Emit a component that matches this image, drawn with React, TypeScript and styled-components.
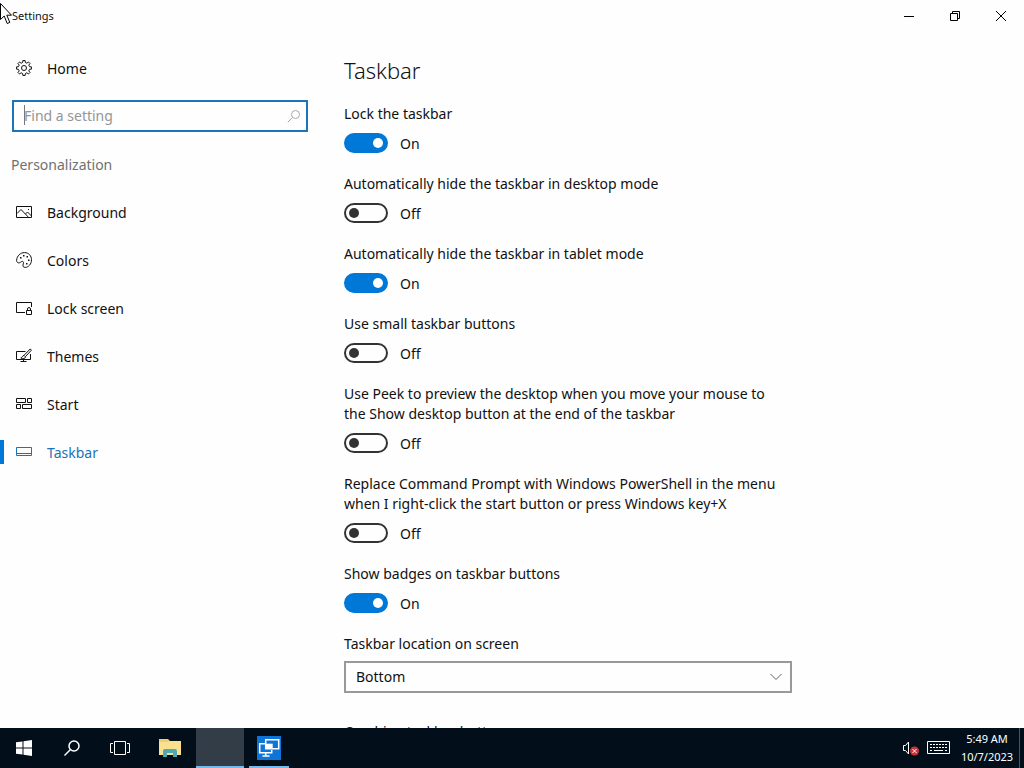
import React, { useState } from "react";
import styled, { createGlobalStyle } from "styled-components";

const GlobalStyle = createGlobalStyle`
  *, *::before, *::after { box-sizing: border-box; }
  html, body, #root { height: 100%; }
  body {
    margin: 0;
    overflow: hidden;
    background: #fefefe;
    color: #111;
    font-family: "Noto Sans", "Open Sans", sans-serif;
    font-size: 14px;
    line-height: 20px;
  }
  button, input, select { font: inherit; color: inherit; }
`;

const Screen = styled.div`
  display: flex;
  flex-direction: column;
  height: 100vh;
`;

const TitleBar = styled.header`
  display: flex;
  justify-content: space-between;
  flex: none;
  height: 32px;
  padding-left: 12px;
`;

const Title = styled.span`
  font-size: 11px;
  line-height: 32px;
`;

const WindowButtons = styled.div`
  display: flex;
`;

const WindowButton = styled.button`
  display: grid;
  place-items: center;
  width: 46px;
  padding: 0;
  border: 0;
  background: transparent;
`;

const Body = styled.div`
  display: flex;
  flex: 1;
  min-height: 0;
`;

const Sidebar = styled.aside`
  flex: none;
  width: 320px;
  padding-top: 12px;
`;

const NavLink = styled.a<{ $active?: boolean }>`
  display: flex;
  align-items: center;
  gap: 14px;
  height: 48px;
  padding-left: 16px;
  color: ${(p) => (p.$active ? "#1a73b8" : "#111")};
  text-decoration: none;
  background: ${(p) =>
    p.$active ? "linear-gradient(#0078d7, #0078d7) 0 50% / 4px 24px no-repeat" : "none"};

  svg { flex: none; }
`;

const NavText = styled.span`
  padding-top: 2px;
`;

const SearchField = styled.label`
  position: relative;
  display: flex;
  align-items: center;
  height: 32px;
  margin: 8px 12px;
  padding: 0 5px 0 10px;
  border: 2px solid #1c74bb;
`;

const SearchInput = styled.input`
  flex: 1;
  min-width: 0;
  padding: 0;
  border: 0;
  outline: 0;
  background: transparent;
  &::placeholder { color: #959595; opacity: 1; }
`;

const Caret = styled.span`
  position: absolute;
  top: 3px;
  left: 10px;
  width: 1px;
  height: 20px;
  background: #777;
`;

const SectionName = styled.h2`
  margin: 0;
  padding: 15px 11px 13px;
  color: #707070;
  font-size: 14px;
  font-weight: 400;
`;

const Content = styled.main`
  flex: 1;
  min-width: 0;
  padding: 23px 24px 0;
  overflow-y: auto;
  scrollbar-width: none;
`;

const Heading = styled.h1`
  margin: 0 0 19px;
  font-size: 22px;
  font-weight: 300;
  line-height: 30px;
`;

const Setting = styled.div`
  display: flex;
  flex-direction: column;
  gap: 9px;
  max-width: 440px;
  margin-bottom: 21px;
`;

const PickSetting = styled(Setting)`
  gap: 7px;
  max-width: 448px;
  margin-bottom: 29px;
`;

const ToggleRow = styled.div`
  display: flex;
  align-items: center;
  gap: 12px;
  height: 20px;
`;

const ToggleState = styled.span`
  padding-top: 2px;
`;

const Switch = styled.input`
  appearance: none;
  display: flex;
  align-items: center;
  width: 44px;
  height: 20px;
  margin: 0;
  padding: 0 3px;
  border: 2px solid #333;
  border-radius: 10px;

  &::before {
    content: "";
    width: 10px;
    height: 10px;
    border-radius: 50%;
    background: #333;
  }
  &:checked {
    justify-content: flex-end;
    border-color: #0078d7;
    background: #0078d7;
  }
  &:checked::before { background: #fff; }
`;

const SelectBox = styled.div`
  display: grid;
  align-items: center;
  > * { grid-area: 1 / 1; }
  > svg { justify-self: end; margin-right: 9px; pointer-events: none; }
`;

const Select = styled.select`
  appearance: none;
  width: 100%;
  height: 32px;
  padding: 0 10px;
  border: 2px solid #999;
  border-radius: 0;
  background: #fefefe;
`;

const Taskbar = styled.footer`
  display: flex;
  justify-content: space-between;
  flex: none;
  height: 40px;
  background: #020f1a;
  color: #fff;
`;

const TaskGroup = styled.div`
  display: flex;
`;

const TaskButton = styled.button<{ $width?: number; $active?: boolean; $running?: boolean }>`
  display: grid;
  place-items: center;
  width: ${(p) => p.$width ?? 48}px;
  padding: 0;
  border: 0;
  background: ${(p) => (p.$active ? "#323d47" : "transparent")};
  box-shadow: ${(p) => (p.$running ? "inset 0 -2px #76b9ed" : "none")};
`;

const RemoteButton = styled(TaskButton)`
  margin-left: 5px;
`;

const Tray = styled.div`
  display: flex;
  align-items: center;
  padding-right: 4px;
`;

const TrayButton = styled.button`
  display: grid;
  place-items: center;
  margin-right: 8px;
  padding: 0;
  border: 0;
  background: transparent;
`;

const Clock = styled.time`
  width: 58px;
  margin-right: 3px;
  font-size: 11px;
  line-height: 18px;
  text-align: center;
  white-space: nowrap;
`;

const ShowDesktop = styled.button`
  align-self: stretch;
  width: 1px;
  padding: 0;
  border: 0;
  background: #4b555e;
`;

const Pointer = styled.svg`
  position: absolute;
  top: 2px;
  left: 0;
  pointer-events: none;
`;

const gearPath = Array.from({ length: 8 }, (_, i) => {
  const at = (r: number, deg: number) => {
    const a = ((i * 45 + deg) * Math.PI) / 180;
    return `${(8 + r * Math.sin(a)).toFixed(2)} ${(8 - r * Math.cos(a)).toFixed(2)}`;
  };
  return `${i ? "L" : "M"}${at(5.8, -13)} L${at(7.5, -9)} L${at(7.5, 9)} L${at(5.8, 13)} L${at(5.4, 22)}`;
}).join(" ") + "Z";

const Icon = ({ children }: { children: React.ReactNode }) => (
  <svg width="17" height="16" viewBox="0 0 17 16" fill="none" stroke="currentColor" aria-hidden="true">
    {children}
  </svg>
);

const navItems = [
  {
    name: "Background",
    icon: (
      <>
        <path d="M.5 2.5h15v11H.5z" />
        <path d="M1 9.5l4-4 7.5 7.8M9.5 10l2-2 4 4" />
        <path d="M12 5h1v1h-1z" fill="currentColor" stroke="none" />
      </>
    ),
  },
  {
    name: "Colors",
    icon: (
      <>
        <path d="M.6 8.2C1 3.8 4.3.6 8.5.6c4.2 0 7 3.2 7 7.2 0 4.3-3 7.5-6.3 7.6-1.7 0-2.4-1-2.2-2.3.2-1.5 1-2.6.1-3.4-1-1-2 .4-3.3 1C2.2 11.4.5 10.3.6 8.2z" />
        <path d="M4 5h1.5v1.5H4zM7 3h1.5v1.5H7zM10.500 4H12v1.500h-1.500zM12 7.500h1.500V9H12zM10 11h1.500v1.500H10z" fill="currentColor" stroke="none" />
      </>
    ),
  },
  {
    name: "Lock screen",
    icon: (
      <>
        <path d="M9 12.500H.5v-10h15V7" />
        <path d="M10.500 10.500h5v4h-5zM11.500 10.500V9a1.500 1.500 0 0 1 3 0v1.500" />
      </>
    ),
  },
  {
    name: "Themes",
    icon: (
      <>
        <path d="M9.500 3.500h-9v8h14V6M7.500 11.500v2M4.500 13.500h6" />
        <path d="M14.300.9L8 7.300l1.400 1.400L15.300 2.300zM8 7.500c-2 0-1.500 2.300-3.200 2.500 2 1 4.500.7 4.700-1" />
      </>
    ),
  },
  { name: "Start", icon: <path d="M.5 2.500h9v4h-9zM11.500 2.500h4v4h-4zM.5 8.500h4v4h-4zM6.500 8.500h9v4h-9z" /> },
  { name: "Taskbar", icon: <path d="M.5 3.500h15v8H.5zM.5 9.500h15" />, active: true },
];

const toggles: [string, boolean][] = [
  ["Lock the taskbar", true],
  ["Automatically hide the taskbar in desktop mode", false],
  ["Automatically hide the taskbar in tablet mode", true],
  ["Use small taskbar buttons", false],
  ["Use Peek to preview the desktop when you move your mouse to the Show desktop button at the end of the taskbar", false],
  ["Replace Command Prompt with Windows PowerShell in the menu when I right-click the start button or press Windows key+X", false],
  ["Show badges on taskbar buttons", true],
];

function ToggleSetting({ label, initial }: { label: string; initial: boolean }) {
  const [on, setOn] = useState(initial);
  const id = React.useId();
  return (
    <Setting>
      <label htmlFor={id}>{label}</label>
      <ToggleRow>
        <Switch id={id} type="checkbox" role="switch" checked={on} onChange={() => setOn(!on)} />
        <ToggleState>{on ? "On" : "Off"}</ToggleState>
      </ToggleRow>
    </Setting>
  );
}

function PickerSetting({ id, label, options }: { id: string; label: string; options: string[] }) {
  return (
    <PickSetting>
      <label htmlFor={id}>{label}</label>
      <SelectBox>
        <Select id={id}>
          {options.map((o) => (
            <option key={o}>{o}</option>
          ))}
        </Select>
        <svg width="14" height="8" viewBox="0 0 14 8" fill="none" stroke="#666" aria-hidden="true">
          <path d="M1.500 1L7 6.500 12.500 1" />
        </svg>
      </SelectBox>
    </PickSetting>
  );
}

export default function App() {
  return (
    <Screen>
      <GlobalStyle />
      <TitleBar>
        <Title>Settings</Title>
        <WindowButtons>
          <WindowButton aria-label="Minimize">
            <svg width="10" height="10" stroke="#000"><path d="M0 5.500h10" /></svg>
          </WindowButton>
          <WindowButton aria-label="Restore">
            <svg width="10" height="10" fill="none" stroke="#000"><path d="M.5 2.500h7v7h-7zM2.500 2.500v-2h7v7h-2" /></svg>
          </WindowButton>
          <WindowButton aria-label="Close">
            <svg width="12" height="12" stroke="#000"><path d="M1 1l10 10M11 1L1 11" /></svg>
          </WindowButton>
        </WindowButtons>
      </TitleBar>

      <Body>
        <Sidebar>
          <NavLink href="#home">
            <Icon>
              <path d={gearPath} />
              <circle cx="8" cy="8" r="2.500" />
            </Icon>
            <NavText>Home</NavText>
          </NavLink>
          <SearchField>
            <SearchInput type="text" placeholder="Find a setting" aria-label="Find a setting" />
            <Caret />
            <svg width="14" height="14" fill="none" stroke="#aaa" aria-hidden="true">
              <circle cx="8.500" cy="5.500" r="4" />
              <path d="M5.500 8.500L.8 13.200" />
            </svg>
          </SearchField>
          <SectionName>Personalization</SectionName>
          <nav>
            {navItems.map((item) => (
              <NavLink key={item.name} href={`#${item.name}`} $active={item.active}>
                <Icon>{item.icon}</Icon>
                <NavText>{item.name}</NavText>
              </NavLink>
            ))}
          </nav>
        </Sidebar>

        <Content>
          <Heading>Taskbar</Heading>
          {toggles.map(([label, on]) => (
            <ToggleSetting key={label} label={label} initial={on} />
          ))}
          <PickerSetting id="location" label="Taskbar location on screen" options={["Bottom", "Top", "Left", "Right"]} />
          <PickerSetting id="combine" label="Combine taskbar buttons" options={["Always, hide labels", "Never"]} />
        </Content>
      </Body>

      <Taskbar>
        <TaskGroup>
          <TaskButton aria-label="Start">
            <svg width="16" height="16" fill="#fff">
              <path d="M0 2.300L6.500 1.400V7.500H0zM7.500 1.200L16 0v7.500H7.500zM0 8.500h6.500v6.100L0 13.700zM7.500 8.500H16V16l-8.500-1.200z" />
            </svg>
          </TaskButton>
          <TaskButton aria-label="Search">
            <svg width="18" height="18" fill="none" stroke="#fff" strokeWidth="1.500">
              <circle cx="11" cy="7" r="5" />
              <path d="M7.500 10.500L1.500 16.500" />
            </svg>
          </TaskButton>
          <TaskButton aria-label="Task View">
            <svg width="20" height="14" fill="none" stroke="#fff">
              <path d="M4.500.5h11v13h-11zM3 2.500H.5v9H3M17 2.500h2.500v9H17" />
            </svg>
          </TaskButton>
          <TaskButton $width={52} aria-label="File Explorer">
            <svg width="22" height="18">
              <path d="M0 0h9l2 2h9v3H0z" fill="#e9cf78" />
              <path d="M0 3h9l2-1h11v14H0z" fill="#fbe08e" />
              <path d="M4 18v-6q0-2 2-2h10q2 0 2 2v6h-4v-4H8v4z" fill="#4fa9b0" />
            </svg>
          </TaskButton>
          <TaskButton $active $running aria-label="Settings" />
          <RemoteButton $width={40} $running aria-label="Remote Desktop">
            <svg width="24" height="24" fill="none" stroke="#fff" strokeWidth="1.500">
              <path d="M0 0h24v24H0z" fill="#0f74d8" stroke="none" />
              <path d="M8 7.700H2.700v9h12V14M8.700 17v3M5.500 20h7" />
              <path d="M8.700 7.700h7v5h-7z" fill="#fff" stroke="none" />
              <path d="M8.700 3.700h13v9h-13z" />
            </svg>
          </RemoteButton>
        </TaskGroup>
        <Tray>
          <TrayButton aria-label="Volume muted">
            <svg width="16" height="16" fill="none" stroke="#fff">
              <path d="M.5 5.500h2l3-3.500v12l-3-3.500h-2z" />
              <circle cx="11.500" cy="11" r="4.500" fill="#c8323a" stroke="none" />
              <path d="M9.500 9l4 4M13.500 9l-4 4" />
            </svg>
          </TrayButton>
          <TrayButton aria-label="Touch keyboard">
            <svg width="23" height="14" fill="none" stroke="#fff">
              <path d="M.5.500h22v12H.5z" />
              <path d="M3 3.500h18M3 6.500h18" strokeDasharray="2 1" />
              <path d="M3 9.500h2M7 9.500h9M18 9.500h2" />
            </svg>
          </TrayButton>
          <Clock>
            5:49 AM
            <br />
            10/7/2023
          </Clock>
          <ShowDesktop aria-label="Show desktop" />
        </Tray>
      </Taskbar>

      <Pointer width="13" height="23" fill="#fff" stroke="#000" aria-hidden="true">
        <path d="M.5 1.500v16l3.700-3.500 3 7.500 2.600-1.100-3-7.200h4.700z" />
      </Pointer>
    </Screen>
  );
}
